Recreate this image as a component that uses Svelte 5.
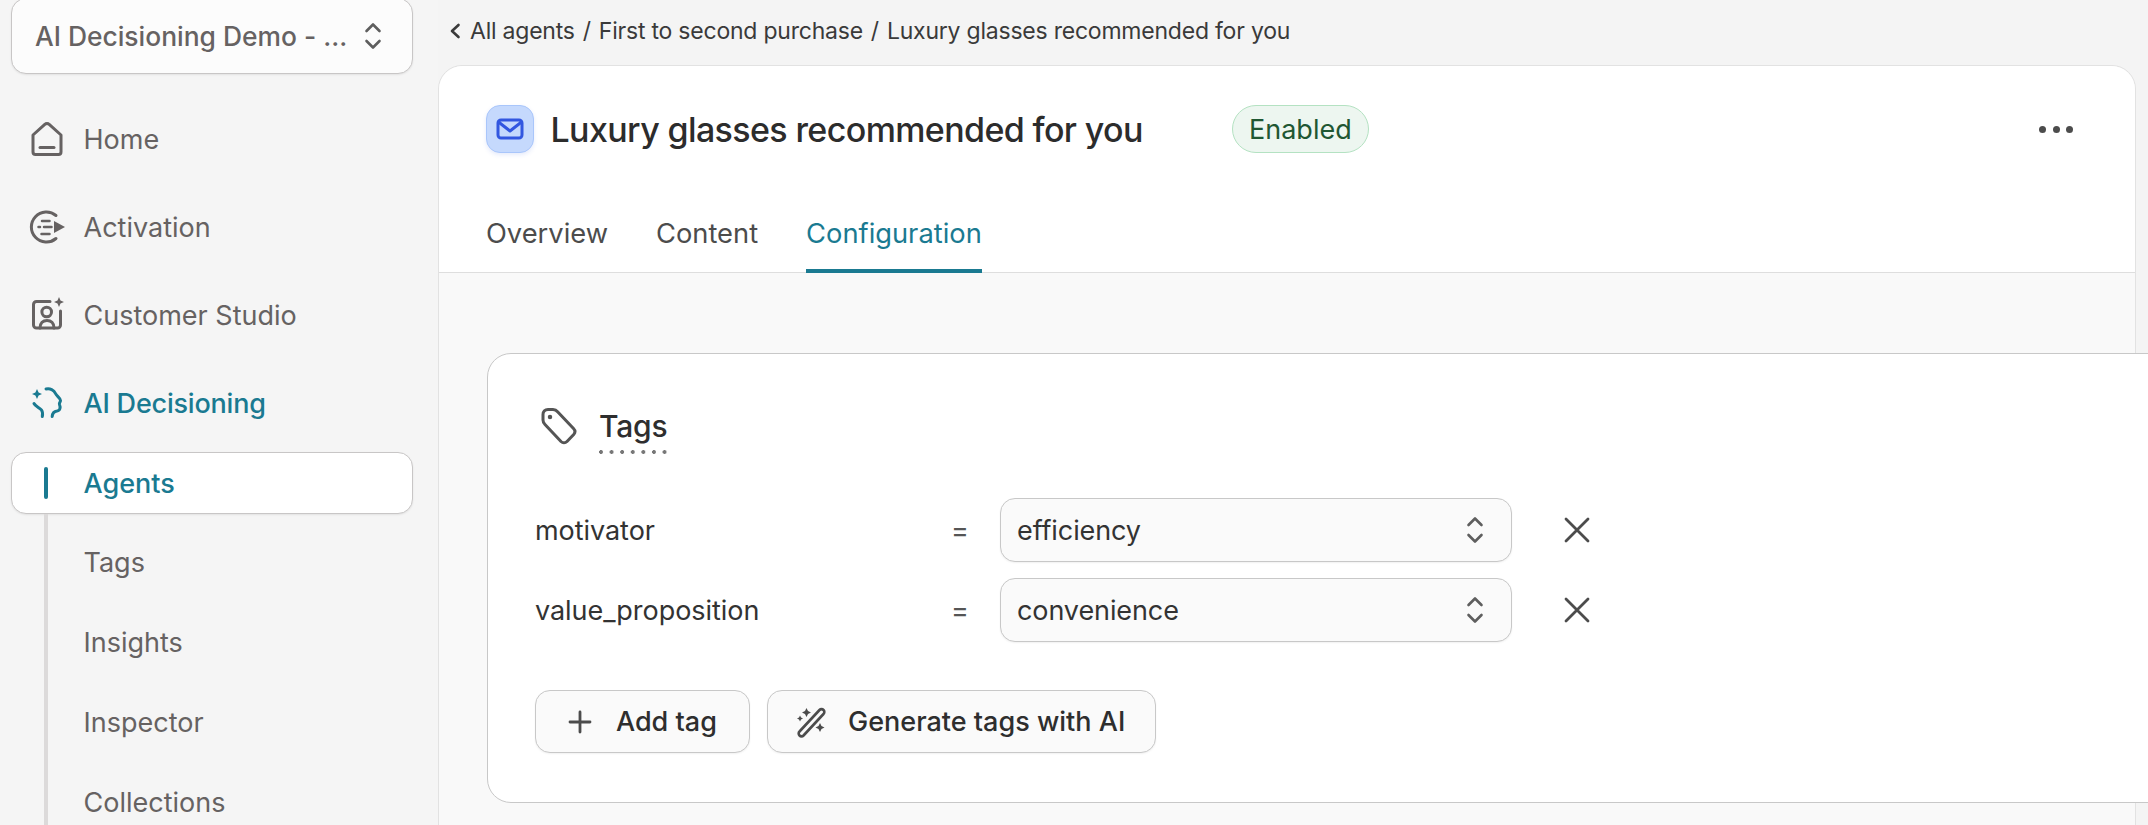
<script>
  const topNav = [
    { label: 'Home', icon: 'home' },
    { label: 'Activation', icon: 'activation' },
    { label: 'Customer Studio', icon: 'studio' },
    { label: 'AI Decisioning', icon: 'ai', active: true }
  ];
  const subNav = ['Tags', 'Insights', 'Inspector', 'Collections'];
  const tags = [
    { key: 'motivator', value: 'efficiency' },
    { key: 'value_proposition', value: 'convenience' }
  ];
</script>

{#snippet updown()}
  <svg class="updown" width="18" height="28" viewBox="0 0 18 28" fill="none" stroke="currentColor" stroke-width="2.6" stroke-linecap="round" stroke-linejoin="round">
    <path d="M2.5 9 9 2.5 15.500 9" />
    <path d="M2.500 19 9 25.500 15.500 19" />
  </svg>
{/snippet}

<div class="shell">
  <aside class="sidebar">
    <button class="workspace">
      <span>AI Decisioning Demo - ...</span>
      {@render updown()}
    </button>

    <nav class="topnav">
      {#each topNav as item}
        <div class="navrow" class:active={item.active}>
          <svg class="navicon" width="37" height="36" viewBox="0 0 37 36" fill="none" stroke="currentColor" stroke-width="3" stroke-linecap="round" stroke-linejoin="round">
            {#if item.icon === 'home'}
              <path d="M4 14 15.800 3.400a3 3 0 0 1 4.400 0L32 14V31a2.500 2.500 0 0 1-2.500 2.500H6.500A2.500 2.500 0 0 1 4 31Z" />
              <path d="M11 26.500H25" />
            {:else if item.icon === 'activation'}
              <path d="M27 6.500A15 15 0 1 0 27 29.500" />
              <path d="M25 12 36 18 25 24Z" fill="currentColor" stroke="none" />
              <path d="M13 12H20.500M9.500 18H11M15 18H22.500M12.500 25H20.500" stroke-width="2.500" />
            {:else if item.icon === 'studio'}
              <path d="M21 4.500H7.500a3 3 0 0 0-3 3V28a3 3 0 0 0 3 3H28.500a3 3 0 0 0 3-3V14" />
              <circle cx="17.700" cy="15" r="4.800" />
              <path d="M11 31c0-5 3-7.500 7-7.500s7 2.500 7 7.500" />
              <path d="M30 0 31.500 3.500 35 5 31.500 6.500 30 10 28.500 6.500 25 5 28.500 3.500Z" fill="currentColor" stroke="none" />
            {:else}
              <path d="M8 4 9.600 7.400 13 9 9.600 10.600 8 14 6.400 10.600 3 9 6.400 7.400Z" fill="currentColor" stroke="none" />
              <path d="M17 4C21 3 25 5 26.500 8.500C27.500 11 31.500 13 31.500 15.500C31.500 17.500 29.800 17.500 30.500 19.500C31.500 22 31.500 25.500 28 26C25 26.300 23.500 27.500 23.200 31.500" />
              <path d="M5 18.500C6.500 21.500 10 22.500 12.500 25C13.500 26.500 13.800 29 13.300 31.500" />
            {/if}
          </svg>
          <span>{item.label}</span>
        </div>
      {/each}
    </nav>

    <div class="pill"><i></i><span>Agents</span></div>
    <div class="subnav">
      {#each subNav as label}
        <div class="subrow">{label}</div>
      {/each}
    </div>
  </aside>

  <main class="main">
    <div class="crumbs">
      <svg width="12" height="18" viewBox="0 0 12 18" fill="none" stroke="currentColor" stroke-width="2.600" stroke-linecap="round" stroke-linejoin="round"><path d="M9.500 3 3 9l6.500 6" /></svg>
      <span class="all">All agents</span><span class="sep">/</span><span>First to second purchase</span><span class="sep">/</span><span>Luxury glasses recommended for you</span>
    </div>

    <section class="panel">
      <header class="head">
        <div class="titlerow">
          <div class="badge">
            <svg width="28" height="22" viewBox="0 0 28 22" fill="none" stroke="#3257e0" stroke-width="3" stroke-linecap="round" stroke-linejoin="round">
              <rect x="2" y="2" width="24" height="18" rx="3" />
              <path d="M2.500 4 14 13 25.500 4" />
            </svg>
          </div>
          <h1>Luxury glasses recommended for you</h1>
          <span class="status">Enabled</span>
          <div class="dots"><b></b><b></b><b></b></div>
        </div>
        <div class="tabs">
          <span class="tab">Overview</span>
          <span class="tab">Content</span>
          <span class="tab current">Configuration</span>
        </div>
      </header>

      <div class="body">
        <div class="card">
          <div class="cardtitle">
            <svg width="38" height="38" viewBox="0 0 38 38" fill="none" stroke="#555" stroke-width="3" stroke-linecap="round" stroke-linejoin="round">
              <path d="M3 7.500 C3 4.500 5 2.500 8 2.500 H13 C15 2.500 16.500 3.300 17.600 4.700 L33.500 21.500 C35.200 23.300 35.200 25.800 33.700 27.500 L27 34.500 C25.200 36.300 22.800 36.300 21 34.500 L5 17.500 C3.700 16.200 3 14.800 3 13Z" />
              <circle cx="10" cy="10" r="1.500" fill="#555" stroke-width="1.500" />
            </svg>
            <h2>Tags</h2>
          </div>

          <div class="rows">
            {#each tags as t}
              <div class="tagrow">
                <span class="key">{t.key}</span>
                <span class="eq">=</span>
                <div class="select"><span>{t.value}</span>{@render updown()}</div>
                <svg class="close" width="26" height="26" viewBox="0 0 26 26" fill="none" stroke="#4c4c4c" stroke-width="2.800" stroke-linecap="round"><path d="M2 2 24 24M24 2 2 24" /></svg>
              </div>
            {/each}
          </div>

          <div class="actions">
            <button class="btn add">
              <svg width="24" height="24" viewBox="0 0 24 24" fill="none" stroke="#4c4c4c" stroke-width="2.800" stroke-linecap="round"><path d="M12 2V22M2 12H22" /></svg>
              <span>Add tag</span>
            </button>
            <button class="btn gen">
              <svg width="32" height="32" viewBox="0 0 32 32" fill="none" stroke="#4c4c4c" stroke-width="2.600" stroke-linecap="round" stroke-linejoin="round">
                <path d="M3.500 25.500 23.500 4a2.800 2.800 0 0 1 4 0 2.800 2.800 0 0 1 0 4L7.500 29.500a2.800 2.800 0 0 1-4 0 2.800 2.800 0 0 1 0-4Z" />
                <path d="M10.500 2 12 5 15 6.500 12 8 10.500 11 9 8 6 6.500 9 5ZM4 9.500 5 11.500 7 12.500 5 13.500 4 15.500 3 13.500 1 12.500 3 11.500ZM24 17 25.500 20 28.500 21.500 25.500 23 24 26 22.500 23 19.500 21.500 22.500 20Z" fill="#4c4c4c" stroke="none" />
              </svg>
              <span>Generate tags with AI</span>
            </button>
          </div>
        </div>
      </div>
    </section>
  </main>
</div>

<style>
  :global(html) {
    overflow: hidden;
  }
  :global(body) {
    margin: 0;
    background: #f4f4f4;
    overflow: hidden;
  }
  .shell {
    display: flex;
    height: 825px;
    overflow: hidden;
    font-family: Inter, "Noto Sans", sans-serif;
    color: #2e2e2e;
    background: #f4f4f4;
  }
  button {
    font: inherit;
    cursor: pointer;
  }

  /* sidebar */
  .sidebar {
    flex: 0 0 438px;
    box-sizing: border-box;
    height: 825px;
    padding: 0 24px 0 11px;
    background: #f5f5f5;
    color: #666262;
    font-size: 27px;
  }
  .workspace {
    width: 402px;
    height: 76px;
    margin-top: -2px;
    padding: 0 30px 0 23px;
    display: flex;
    align-items: center;
    justify-content: space-between;
    border: 1px solid #c8c6c6;
    border-radius: 15px;
    background: #fcfcfc;
    color: #666262;
    font-size: 26.4px;
    font-weight: 500;
    box-shadow: 0 1px 2px rgba(0, 0, 0, 0.08);
  }
  .topnav {
    margin-top: 21px;
  }
  .navrow {
    height: 88px;
    display: flex;
    align-items: center;
    gap: 17.500px;
    padding-left: 18px;
  }
  .navrow.active {
    color: #1a7a91;
    font-weight: 500;
    letter-spacing: -0.2px;
  }
  .pill {
    width: 402px;
    height: 62px;
    box-sizing: border-box;
    margin-top: 5px;
    display: flex;
    align-items: center;
    padding-left: 32px;
    border: 1px solid #c8c6c6;
    border-radius: 15px;
    background: #fff;
    color: #1a7a91;
    font-weight: 500;
    box-shadow: 0 1px 2px rgba(0, 0, 0, 0.08);
  }
  .pill i {
    width: 4px;
    height: 32px;
    border-radius: 2px;
    background: #1a7a91;
    margin-right: 35.500px;
  }
  .subnav {
    margin-left: 33px;
    padding-top: 8px;
    border-left: 4px solid #dcdada;
    height: 400px;
  }
  .subrow {
    height: 80px;
    display: flex;
    align-items: center;
    padding-left: 36px;
    margin-left: -0.500px;
  }

  /* main */
  .main {
    flex: 1;
    min-width: 0;
    padding-right: 12px;
  }
  .crumbs {
    height: 65px;
    box-sizing: border-box;
    padding: 0 0 3px 11px;
    display: flex;
    align-items: center;
    color: #3a3a3a;
    font-size: 23px;
    letter-spacing: -0.22px;
  }
  .all {
    margin-left: 9px;
  }
  .sep {
    margin: 0 8px;
  }
  .panel {
    height: 800px;
    box-sizing: border-box;
    background: #f9f9f9;
    border: 1px solid #e2e2e2;
    border-radius: 24px 24px 0 0;
  }
  .head {
    height: 207px;
    box-sizing: border-box;
    background: #fff;
    border-radius: 24px 24px 0 0;
    border-bottom: 1px solid #dedede;
    padding: 39px 47px 0;
    display: flex;
    flex-direction: column;
  }
  .titlerow {
    display: flex;
    align-items: center;
    height: 48px;
  }
  .badge {
    width: 48px;
    height: 48px;
    box-sizing: border-box;
    border: 1px solid #a9c6fb;
    border-radius: 14px;
    background: #c5d9fd;
    display: flex;
    align-items: center;
    justify-content: center;
    box-shadow: 0 2px 4px rgba(50, 87, 224, 0.12);
  }
  h1 {
    margin: 0 0 0 16.500px;
    font-size: 34px;
    font-weight: 500;
    letter-spacing: -0.62px;
    color: #2c2c2c;
  }
  .status {
    margin-left: 89px;
    width: 137px;
    height: 48px;
    box-sizing: border-box;
    display: flex;
    align-items: center;
    justify-content: center;
    border: 1px solid #b4e2c2;
    border-radius: 24px;
    background: #edf6f0;
    color: #1f5733;
    font-size: 27px;
  }
  .dots {
    margin-left: auto;
    margin-right: 15px;
    display: flex;
    gap: 6.500px;
  }
  .dots b {
    width: 7px;
    height: 7px;
    border-radius: 50%;
    background: #4c4c4c;
  }
  .tabs {
    margin-top: auto;
    display: flex;
    gap: 48px;
    font-size: 27.3px;
    color: #4c4c4c;
  }
  .tab {
    height: 63px;
    box-sizing: border-box;
    padding-top: 7px;
    margin-bottom: -1px;
  }
  .tab.current {
    color: #1a7a91;
    border-bottom: 4px solid #1a7a91;
  }
  .body {
    padding: 80px 0 0 48px;
  }
  .card {
    width: 1700px;
    height: 450px;
    box-sizing: border-box;
    padding: 0 0 0 47px;
    background: #fff;
    border: 1px solid #c8c8c8;
    border-radius: 24px 0 0 24px;
  }
  .cardtitle {
    display: flex;
    align-items: flex-start;
    gap: 21px;
    padding-top: 53px;
    margin-left: 5px;
    height: 90px;
    box-sizing: border-box;
  }
  h2 {
    margin: 0;
    font-size: 30px;
    font-weight: 500;
    line-height: 38px;
    letter-spacing: -0.2px;
    padding-bottom: 9px;
    background: radial-gradient(circle at 2px 2px, #777 1.700px, transparent 2.200px) left bottom / 10.600px 4px repeat-x;
  }
  .rows {
    margin-top: 54px;
    display: flex;
    flex-direction: column;
    gap: 16px;
  }
  .tagrow {
    display: flex;
    align-items: center;
    height: 64px;
    font-size: 27px;
    color: #333;
  }
  .key {
    width: 416px;
    letter-spacing: -0.05px;
  }
  .eq {
    width: 49px;
    color: #555;
  }
  .select {
    width: 512px;
    height: 64px;
    box-sizing: border-box;
    padding: 0 27px 0 16px;
    display: flex;
    align-items: center;
    justify-content: space-between;
    border: 1px solid #c8c8c8;
    border-radius: 15px;
    background: #fafafa;
    box-shadow: 0 1px 2px rgba(0, 0, 0, 0.06);
    letter-spacing: -0.1px;
  }
  .updown {
    color: #5e5e5e;
    flex: none;
  }
  .close {
    margin-left: 52px;
  }
  .actions {
    margin-top: 48px;
    display: flex;
    gap: 17px;
  }
  .btn {
    height: 63px;
    box-sizing: border-box;
    display: flex;
    align-items: center;
    border: 1px solid #c8c8c8;
    border-radius: 15px;
    background: #fafafa;
    color: #2e2e2e;
    font-size: 27px;
    font-weight: 500;
    box-shadow: 0 1px 2px rgba(0, 0, 0, 0.06);
  }
  .add {
    width: 215px;
    padding: 0 0 0 32px;
    gap: 24px;
  }
  .gen {
    width: 389px;
    padding: 0 0 0 28px;
    gap: 20px;
  }
</style>
